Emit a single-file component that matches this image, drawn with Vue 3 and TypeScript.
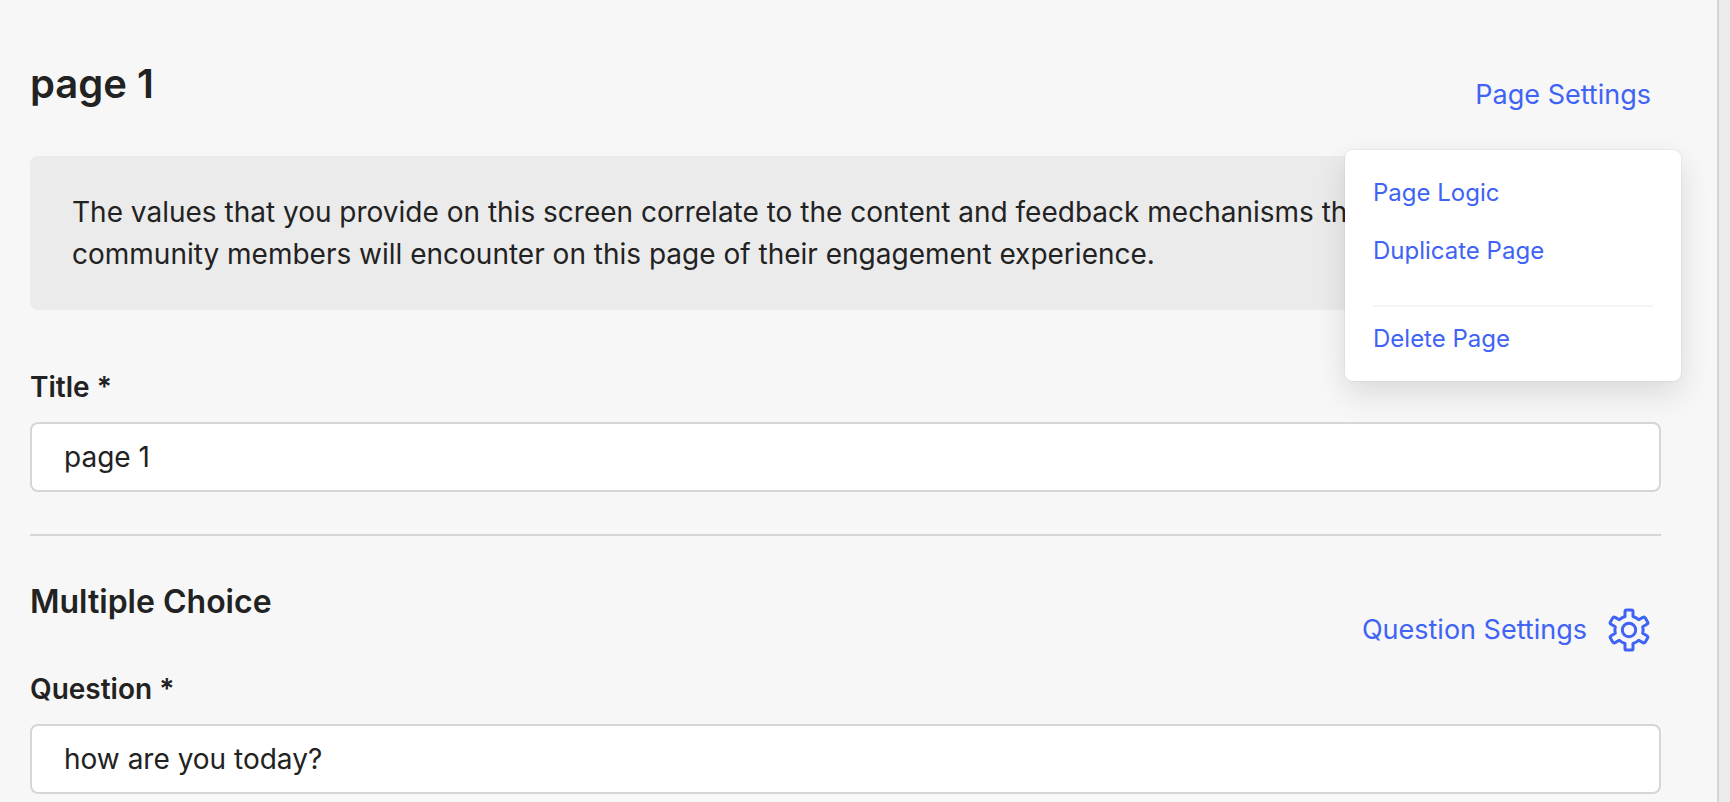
<script setup lang="ts">
import { ref } from 'vue'

interface MenuItem {
  label: string
  separated?: boolean
}

const title = ref('page 1')
const question = ref('how are you today?')
const menuOpen = ref(true)

const menuItems: MenuItem[] = [
  { label: 'Page Logic' },
  { label: 'Duplicate Page' },
  { label: 'Delete Page', separated: true },
]
</script>

<template>
  <div class="shell">
    <main class="panel">
      <header class="page-head">
        <h1>{{ title }}</h1>
        <div class="menu-anchor">
          <button type="button" class="link" aria-haspopup="menu" :aria-expanded="menuOpen" @click="menuOpen = !menuOpen">
            Page Settings
          </button>
          <div v-if="menuOpen" class="menu" role="menu">
            <button
              v-for="item in menuItems"
              :key="item.label"
              type="button"
              role="menuitem"
              class="menu-item"
              :class="{ separated: item.separated }"
            >
              {{ item.label }}
            </button>
          </div>
        </div>
      </header>

      <p class="notice">
        The values that you provide on this screen correlate to the content and feedback mechanisms that
        community&nbsp;members will encounter on this page of their engagement experience.
      </p>

      <div class="field">
        <label for="page-title">Title *</label>
        <input id="page-title" v-model="title" type="text" />
      </div>

      <hr />

      <section>
        <div class="question-head">
          <h2>Multiple Choice</h2>
          <button type="button" class="link">
            Question Settings
            <svg class="gear" viewBox="0 0 44 44" aria-hidden="true">
              <path
                d="M18 8.5V3.6Q18 1.9 19.7 1.9H24.3Q26 1.9 26 3.6V8.5Q29.4 9.5 31.7 11.8L35.9 9.4Q37.4 8.5 38.3 10L40.6 13.9Q41.4 15.4 39.9 16.3L35.7 18.7Q36.5 22 35.7 25.3L39.9 27.7Q41.4 28.6 40.6 30.1L38.3 34Q37.4 35.5 35.9 34.6L31.7 32.2Q29.4 34.5 26 35.5V40.4Q26 42.1 24.3 42.1H19.7Q18 42.1 18 40.4V35.5Q14.6 34.5 12.3 32.2L8.1 34.6Q6.6 35.5 5.7 34L3.4 30.1Q2.6 28.6 4.1 27.7L8.3 25.3Q7.5 22 8.3 18.7L4.1 16.3Q2.6 15.4 3.4 13.9L5.7 10Q6.6 8.5 8.1 9.4L12.3 11.8Q14.6 9.5 18 8.5Z"
              />
              <circle cx="22" cy="22" r="6.7" />
            </svg>
          </button>
        </div>
        <div class="field">
          <label for="question-text">Question *</label>
          <input id="question-text" v-model="question" type="text" />
        </div>
      </section>
    </main>
  </div>
</template>

<style>
body {
  margin: 0;
  background: #ebebeb;
}
</style>

<style scoped>
.shell {
  box-sizing: border-box;
  min-height: 100vh;
  padding-right: 11px;
  display: flex;
  background: #ebebeb;
  color: #222;
  font-family: Inter, 'Liberation Sans', sans-serif;
  font-size: 28px;
  font-weight: 400;
  line-height: 42px;
  font-optical-sizing: none;
}

.panel {
  box-sizing: border-box;
  flex: 1;
  min-width: 0;
  padding: 60px 56px 8px 30px;
  background: #f7f7f7;
  border-right: 2px solid #d6d6d6;
}

.page-head {
  display: flex;
  justify-content: space-between;
  align-items: flex-start;
  margin-bottom: 41px;
}

h1,
h2 {
  margin: 0;
  font-weight: 600;
}

h1 {
  font-size: 40px;
  line-height: 48px;
}

h2 {
  font-size: 32px;
  line-height: 40px;
}

button {
  margin: 0;
  padding: 0;
  border: 0;
  background: none;
  font: inherit;
  color: #3e63f5;
  cursor: pointer;
}

.menu-anchor {
  position: relative;
  padding: 15px 10px 0 0;
}

.link {
  display: flex;
  align-items: center;
  gap: 20px;
  font-size: 27px;
  line-height: 40px;
}

.menu {
  position: absolute;
  z-index: 1;
  top: 90px;
  right: -20px;
  box-sizing: border-box;
  width: 336px;
  padding: 25px 28px 24px;
  display: flex;
  flex-direction: column;
  gap: 22px;
  background: #fff;
  border-radius: 8px;
  box-shadow: 0 0 2px rgba(0, 0, 0, 0.12), 0 12px 32px rgba(0, 0, 0, 0.12);
}

.menu-item {
  font-size: 24px;
  line-height: 36px;
  text-align: left;
}

.menu-item.separated {
  margin-top: 14px;
  padding-top: 14px;
  border-top: 2px solid #f5f5f5;
}

.notice {
  margin: 0 0 56px;
  padding: 35px 42px;
  background: #ebebeb;
  border-radius: 8px;
}

.field {
  display: flex;
  flex-direction: column;
  gap: 14px;
}

label {
  font-weight: 600;
}

input {
  box-sizing: border-box;
  width: 100%;
  height: 70px;
  padding: 0 32px;
  border: 2px solid #d6d6d6;
  border-radius: 8px;
  background: #fff;
  color: inherit;
  font: inherit;
}

hr {
  margin: 42px 0 46px;
  border: 0;
  border-top: 2px solid #d6d6d6;
}

.question-head {
  display: flex;
  justify-content: space-between;
  align-items: flex-start;
  margin-bottom: 16px;
}

.question-head .link {
  padding: 26px 10px 0 0;
}

.gear {
  width: 44px;
  height: 44px;
  fill: none;
  stroke: currentColor;
  stroke-width: 3;
  stroke-linejoin: round;
}
</style>
